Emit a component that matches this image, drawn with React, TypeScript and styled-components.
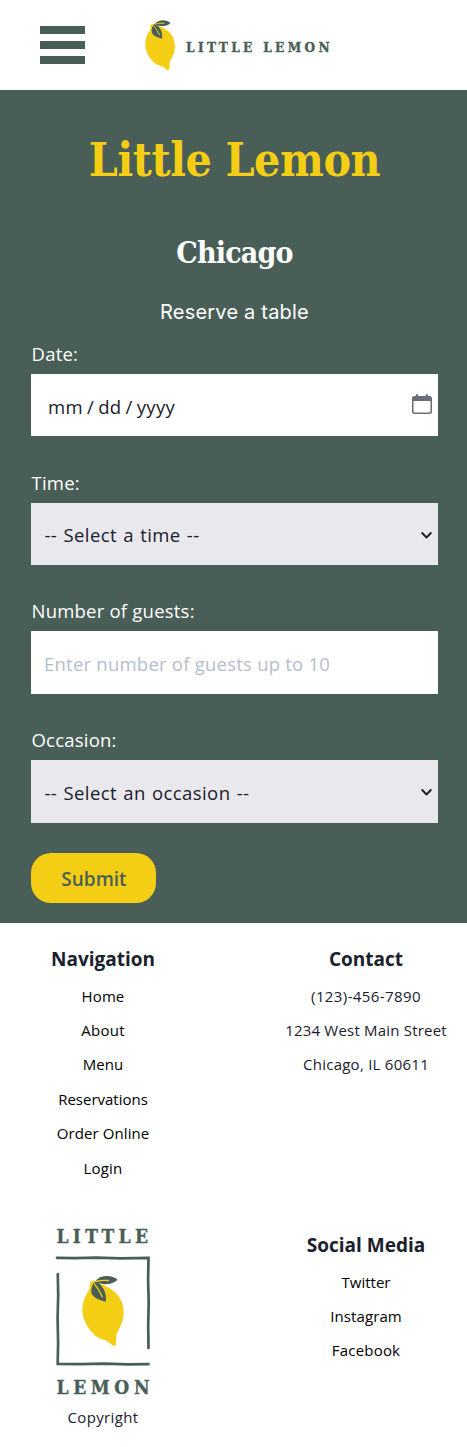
import React from 'react';
import styled, { createGlobalStyle } from 'styled-components';

const green = '#495e57';
const yellow = '#f4ce14';
const ink = '#1a202c';

const GlobalStyle = createGlobalStyle`
  *, *::before, *::after { box-sizing: border-box; }
  body {
    margin: 0;
    background: #fff;
    color: ${ink};
    font-family: 'Open Sans', 'Noto Sans', sans-serif;
  }
  h1, h2, h3, p, ul { margin: 0; padding: 0; }
  ul { list-style: none; }
`;

const Page = styled.div`
  width: 100%;
  height: 1447px;
  overflow: hidden;
`;

const Header = styled.header`
  display: flex;
  align-items: center;
  height: 90px;
  padding-left: 40px;
`;

const MenuButton = styled.button`
  display: flex;
  flex-direction: column;
  gap: 7px;
  width: 45px;
  margin-right: 59px;
  padding: 0;
  border: 0;
  background: none;
`;

const MenuBar = styled.span`
  height: 8px;
  background: ${green};
`;

const Hero = styled.main`
  height: 833px;
  padding: 35px 29px 0 31px;
  background: ${green};
  color: #fff;
`;

const Title = styled.h1`
  height: 70px;
  margin: 0 -10px;
  text-align: center;
  white-space: nowrap;
  font: bold 46px/70px 'DejaVu Serif Condensed', 'DejaVu Serif', serif;
  font-stretch: condensed;
  letter-spacing: -0.4px;
  color: ${yellow};
`;

const City = styled.h2`
  margin-top: 33px;
  text-align: center;
  font: bold 30px/50px 'DejaVu Serif Condensed', 'DejaVu Serif', serif;
  font-stretch: condensed;
  letter-spacing: -0.8px;
`;

const Prompt = styled.p`
  margin-top: 19px;
  text-align: center;
  font: 20px/30px Inter, sans-serif;
  letter-spacing: 0.2px;
`;

const Form = styled.form`
  margin-top: 8.8px;
`;

const Field = styled.div`
  height: 128.75px;
`;

const Label = styled.label`
  display: block;
  height: 38px;
  padding-left: 0.5px;
  font-size: 18.5px;
  line-height: 36px;
  letter-spacing: 0.22px;
`;

const Control = styled.div<{ $muted?: boolean }>`
  display: flex;
  align-items: center;
  height: 62.5px;
  padding-right: 5px;
  background: ${(p) => (p.$muted ? '#e9e8ed' : '#fff')};
  color: ${ink};
`;

const controlText = `
  flex: 1;
  min-width: 0;
  height: 100%;
  border: 0;
  outline: 0;
  appearance: none;
  background: transparent;
  color: ${ink};
  font-family: 'Open Sans', 'Noto Sans', sans-serif;
  font-size: 18.5px;
`;

const Select = styled.select`
  ${controlText}
  padding: 2px 0 0 13.5px;
  letter-spacing: 0.42px;
  word-spacing: 1px;
`;

const Input = styled.input`
  ${controlText}
  padding: 1px 0 0 13px;
  letter-spacing: 0.23px;
  &::placeholder { color: #b4becb; opacity: 1; }
`;

const DateText = styled.div`
  display: flex;
  flex: 1;
  gap: 4px;
  padding: 3px 0 0 17px;
  font-size: 18.5px;
  letter-spacing: 0.36px;
`;

const Submit = styled.button`
  display: block;
  width: 125px;
  height: 50px;
  margin-top: 2px;
  padding: 2px 0 0 1px;
  border: 0;
  border-radius: 20px;
  background: ${yellow};
  color: ${green};
  font: 600 19px/48px 'Open Sans', sans-serif;
`;

const Footer = styled.footer`
  display: grid;
  grid-template-columns: 206px 202px;
  grid-template-rows: 286px 238px;
  justify-content: space-between;
  text-align: center;
`;

const Column = styled.section`
  padding-top: 21px;
`;

const ColumnTitle = styled.h3`
  margin-bottom: 4.6px;
  font-size: 19px;
  font-weight: 700;
  line-height: 30px;
`;

const Item = styled.li<{ $link?: boolean; $tracking?: number }>`
  height: 34.4px;
  font-size: 15px;
  line-height: 34.4px;
  letter-spacing: ${(p) => p.$tracking ?? 0}px;
  color: ${(p) => (p.$link ? '#000' : ink)};
`;

const Brand = styled.section`
  display: flex;
  flex-direction: column;
  align-items: center;
  padding-top: 15px;
`;

const Copyright = styled.p`
  margin-top: 9px;
  font-size: 15px;
  line-height: 24px;
  letter-spacing: 0.35px;
`;

const LogoText = styled.text`
  font-family: 'DejaVu Serif Condensed', 'DejaVu Serif', serif;
  font-weight: 700;
  font-stretch: condensed;
  fill: ${green};
  stroke: ${green};
  stroke-width: 0.35px;
`;

function Lemon() {
  return (
    <>
      <path
        d="M27 20 C32 13 43 16 50 23 C77 31 110 48 121 82 C131 113 124 143 109 166 C101 178 105 192 103 205 C101 214 94 211 88 206 C77 192 58 193 44 183 C20 164 3 133 2 105 C1 80 13 56 22 44 C26 35 22 27 27 20Z"
        fill={yellow}
      />
      <path d="M42 15 C55 2 83 -6 108 13 C91 29 64 29 48 21Z" fill={green} />
      <path d="M43 17 C31 25 25 42 31 57 C40 70 61 76 72 79 C76 51 63 32 46 18Z" fill={green} />
      <path
        d="M43 18 C58 13 68 14 80 15 M38 25 Q51 40 62 64"
        fill="none"
        stroke={yellow}
        strokeWidth="4"
        strokeLinecap="round"
      />
    </>
  );
}

function HeaderLogo() {
  return (
    <svg width="190" height="52" viewBox="0 0 190 52">
      <g transform="translate(.8 .8) scale(.239)">
        <Lemon />
      </g>
      <LogoText x="42" y="32.8" fontSize="13.5" textLength="143.5">
        LITTLE LEMON
      </LogoText>
    </svg>
  );
}

function FooterLogo() {
  return (
    <svg width="106" height="172" viewBox="50 1224 106 172">
      <LogoText x="56.5" y="1242.8" fontSize="19" textLength="91.5">
        LITTLE
      </LogoText>
      <LogoText x="56.5" y="1393.5" fontSize="19" textLength="93">
        LEMON
      </LogoText>
      <path
        d="M57 1257.8 L75 1258.2 L96 1257.7 L121 1258.3 L148.5 1257.8 L148.1 1280 L148.7 1302 L148.2 1325 L148.5 1348"
        fill="none"
        stroke={green}
        strokeWidth="2.7"
        strokeLinecap="round"
      />
      <path
        d="M57.8 1274 L58.2 1295 L57.6 1318 L58.1 1343 L57.7 1364 L80 1364.2 L104 1363.7 L128 1364.3 L148.5 1364.2"
        fill="none"
        stroke={green}
        strokeWidth="2.7"
        strokeLinecap="round"
      />
      <g transform="translate(81.7 1275.5) scale(.3333)">
        <Lemon />
      </g>
    </svg>
  );
}

function Chevron() {
  return (
    <svg width="14" height="12" viewBox="0 0 14 12" fill="none">
      <path d="M3.2 5 L7.5 9.5 L11.8 5" stroke={ink} strokeWidth="1.9" strokeLinecap="round" strokeLinejoin="round" />
    </svg>
  );
}

const CalendarSvg = styled.svg`
  margin-bottom: 3px;
`;

function CalendarIcon() {
  return (
    <CalendarSvg width="22" height="22" viewBox="0 0 22 22" fill="#6b6d78">
      <path
        d="M5 2Q5 1 6 1T7 2V3H15V2Q15 1 16 1T17 2V3H18.5A2.5 2.5 0 0 1 21 5.5V18.5A2.5 2.5 0 0 1 18.5 21H3.5A2.5 2.5 0 0 1 1 18.5V5.5A2.5 2.5 0 0 1 3.5 3H5ZM2.5 8V18.2Q2.5 19.5 3.8 19.5H18.2Q19.5 19.5 19.5 18.2V8Z"
        fillRule="evenodd"
      />
    </CalendarSvg>
  );
}

const navigation: [string, number][] = [
  ['Home', 0.1],
  ['About', 0.3],
  ['Menu', 0],
  ['Reservations', 0],
  ['Order Online', 0.1],
  ['Login', 0.2],
];
const contact: [string, number][] = [
  ['(123)-456-7890', 0.4],
  ['1234 West Main Street', 0.2],
  ['Chicago, IL 60611', 0.25],
];
const social: [string, number][] = [
  ['Twitter', 0],
  ['Instagram', 0.1],
  ['Facebook', 0.2],
];

export default function App() {
  return (
    <Page>
      <GlobalStyle />
      <Header>
        <MenuButton aria-label="Menu">
          <MenuBar />
          <MenuBar />
          <MenuBar />
        </MenuButton>
        <HeaderLogo />
      </Header>
      <Hero>
        <Title>Little Lemon</Title>
        <City>Chicago</City>
        <Prompt>Reserve a table</Prompt>
        <Form>
          <Field>
            <Label>Date:</Label>
            <Control>
              <DateText>
                <span>mm</span>
                <span>/</span>
                <span>dd</span>
                <span>/</span>
                <span>yyyy</span>
              </DateText>
              <CalendarIcon />
            </Control>
          </Field>
          <Field>
            <Label>Time:</Label>
            <Control $muted>
              <Select>
                <option>-- Select a time --</option>
              </Select>
              <Chevron />
            </Control>
          </Field>
          <Field>
            <Label>Number of guests:</Label>
            <Control>
              <Input placeholder="Enter number of guests up to 10" />
            </Control>
          </Field>
          <Field>
            <Label>Occasion:</Label>
            <Control $muted>
              <Select>
                <option>-- Select an occasion --</option>
              </Select>
              <Chevron />
            </Control>
          </Field>
          <Submit type="button">Submit</Submit>
        </Form>
      </Hero>
      <Footer>
        <Column>
          <ColumnTitle>Navigation</ColumnTitle>
          <ul>
            {navigation.map(([name, tracking]) => (
              <Item key={name} $link $tracking={tracking}>
                {name}
              </Item>
            ))}
          </ul>
        </Column>
        <Column>
          <ColumnTitle>Contact</ColumnTitle>
          <ul>
            {contact.map(([line, tracking]) => (
              <Item key={line} $tracking={tracking}>
                {line}
              </Item>
            ))}
          </ul>
        </Column>
        <Brand>
          <FooterLogo />
          <Copyright>Copyright</Copyright>
        </Brand>
        <Column>
          <ColumnTitle>Social Media</ColumnTitle>
          <ul>
            {social.map(([name, tracking]) => (
              <Item key={name} $link $tracking={tracking}>
                {name}
              </Item>
            ))}
          </ul>
        </Column>
      </Footer>
    </Page>
  );
}
